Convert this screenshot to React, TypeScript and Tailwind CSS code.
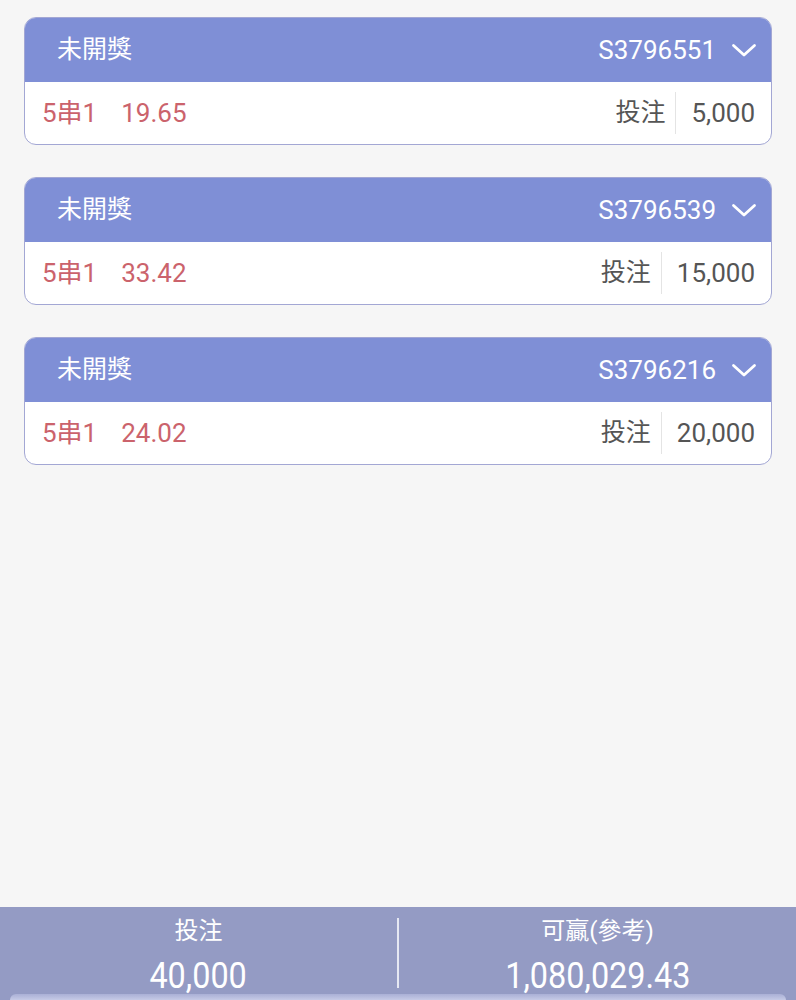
import React from "react";

const bets = [
  { id: "S3796551", odds: "19.65", amount: "5,000" },
  { id: "S3796539", odds: "33.42", amount: "15,000" },
  { id: "S3796216", odds: "24.02", amount: "20,000" },
];

function Chevron() {
  return (
    <svg width="26" height="26" viewBox="0 0 26 26" fill="none" stroke="white" strokeWidth="2.8" strokeLinecap="round" strokeLinejoin="round">
      <path d="M2.5 8.5 L13 18 L23.5 8.5" />
    </svg>
  );
}

export default function App() {
  return (
    <div
      className="w-[796px] h-[1000px] bg-[#f6f6f6] flex flex-col overflow-hidden"
      style={{ fontFamily: "Roboto, 'Noto Sans CJK TC', sans-serif" }}
    >
      <div className="flex-1 flex flex-col gap-[32px] pt-[17px] px-[24px]">
        {bets.map((b) => (
          <div
            key={b.id}
            className="h-[128px] rounded-[12px] border border-[#a3a7d4] bg-white overflow-hidden flex flex-col"
          >
            <div className="h-[64px] bg-[#7f8fd6] flex items-center justify-between pl-[32px] pr-[14px] text-white text-[25px]">
              <span>未開獎</span>
              <div className="flex items-center gap-[15px]">
                <span className="text-[26px]">{b.id}</span>
                <Chevron />
              </div>
            </div>
            <div className="flex-1 flex items-center justify-between pl-[17px] pr-[16px] text-[26px]">
              <div className="flex items-center gap-[24px] text-[#cb636c]">
                <span>5串1</span>
                <span>{b.odds}</span>
              </div>
              <div className="flex items-center text-[#555555]">
                <span className="text-[25px]">投注</span>
                <div className="w-px h-[42px] bg-[#e4e4e4] ml-[10px] mr-[15px]" />
                <span>{b.amount}</span>
              </div>
            </div>
          </div>
        ))}
      </div>
      <div className="h-[93px] bg-[#949bc4] relative flex text-white">
        <div className="flex-1 flex flex-col items-center pt-[9px]">
          <span className="text-[24px] leading-[30px]">投注</span>
          <span className="text-[36px] leading-[40px] mt-[10px] scale-x-[0.9]">40,000</span>
        </div>
        <div className="w-[2px] h-[70px] bg-[#e6e8f3] mt-[11px]" />
        <div className="flex-1 flex flex-col items-center pt-[9px]">
          <span className="text-[24px] leading-[30px]">可贏(參考)</span>
          <span className="text-[36px] leading-[40px] mt-[10px] scale-x-[0.9]">1,080,029.43</span>
        </div>
        <div className="absolute left-[10px] right-[10px] bottom-0 h-[6px] rounded-t-[14px] bg-gradient-to-b from-[#aab0d6] to-[#c6cae6]" />
      </div>
    </div>
  );
}
